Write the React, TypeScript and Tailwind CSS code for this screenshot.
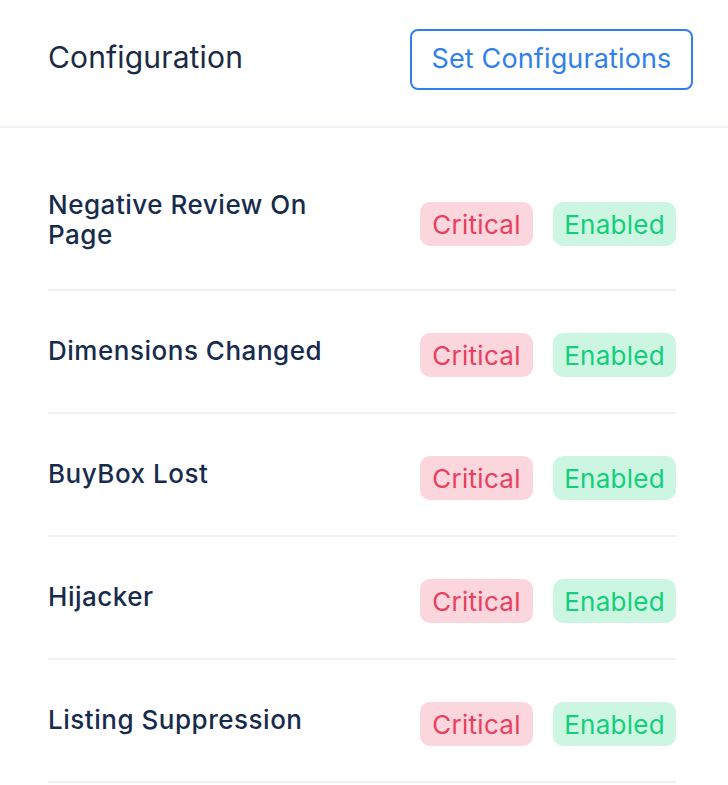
import React from "react";

const rows = [
  "Negative Review On Page",
  "Dimensions Changed",
  "BuyBox Lost",
  "Hijacker",
  "Listing Suppression",
];

export default function App() {
  return (
    <div
      className="w-[728px] min-h-[785px] bg-white text-[#172b4d]"
      style={{ fontFamily: "Inter, 'Noto Sans', sans-serif" }}
    >
      <div className="flex items-center justify-between pl-12 pr-[35px] pt-[29px] pb-[36px] border-b-2 border-[#eef2f7]">
        <h1 className="text-[30px] font-normal tracking-[0.005em] text-[#1b2a45] -mt-1">Configuration</h1>
        <button className="h-[61px] w-[283px] rounded-[8px] border-2 border-[#2f80ed] text-[27px] text-[#2f80ed] tracking-[0.005em]">
          Set Configurations
        </button>
      </div>
      <div className="pl-12 pr-[52px] pt-[24px]">
        {rows.map((r) => (
          <div
            key={r}
            className="flex items-center justify-between pt-[42px] pb-[35px] border-b-2 border-[#eef2f7]"
          >
            <div className="w-[300px] -translate-y-1 text-[26px] leading-[30px] font-medium tracking-[0.02em] text-[#172b4d]">
              {r}
            </div>
            <div className="flex gap-5">
              <span className="h-[44px] w-[113px] flex items-center justify-center rounded-[10px] bg-[#fbd6dd] text-[26px] tracking-[0.01em] text-[#e8405e]">
                Critical
              </span>
              <span className="h-[44px] w-[123px] flex items-center justify-center rounded-[10px] bg-[#ccf5e2] text-[26px] tracking-[0.01em] text-[#12cf7c]">
                Enabled
              </span>
            </div>
          </div>
        ))}
      </div>
    </div>
  );
}
